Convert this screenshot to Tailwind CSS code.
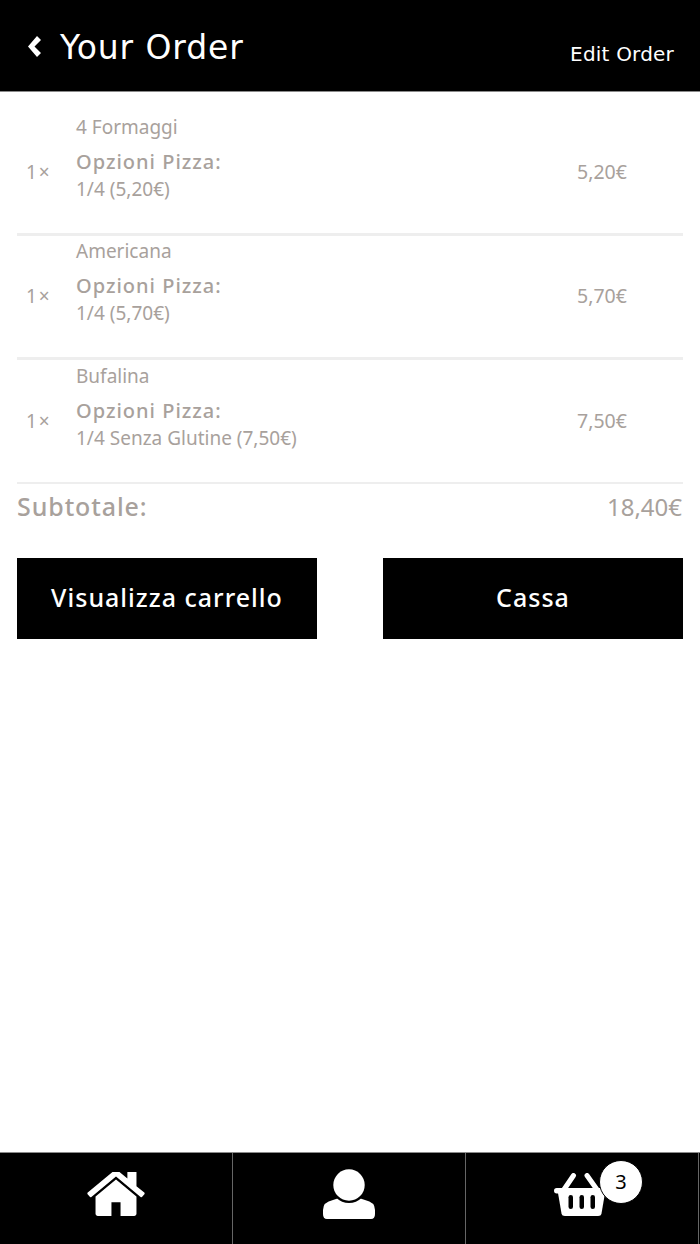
<!DOCTYPE html>
<html lang="en">
<head>
    <meta charset="UTF-8">
    <meta name="viewport" content="width=device-width, initial-scale=1.0">
    <title>Your Order</title>
    <script src="https://cdn.jsdelivr.net/npm/@tailwindcss/browser@4"></script>
</head>
<body class="bg-white font-['Noto_Sans',sans-serif] text-[#a8a19c]">
    <div class="flex flex-col h-[1244px] w-[700px] overflow-hidden">
        <!-- Header -->
        <header class="h-[92px] shrink-0 bg-black border-b border-[#8a8a8a] flex justify-between text-white font-['DejaVu_Sans',sans-serif]">
            <div class="flex items-center pl-[28px] pt-[4px]">
                <svg class="w-[13px] h-[21px] mr-[19px] -mt-[2px]" viewBox="0 0 13 21" fill="#fff"><path d="M9 0 13 4 6.500 10.500 13 17 9 21 0 10.500z"/></svg>
                <span class="text-[33px] tracking-[0.9px] leading-none">Your Order</span>
            </div>
            <a class="pt-[42px] pr-[26px] text-[20px] leading-[24px] tracking-[0.2px]">Edit Order</a>
        </header>

        <!-- Cart -->
        <main class="flex-1 px-[17px] pt-[19px]">
            <div class="h-[125px] border-b-[3px] border-[#eeeeee] flex items-center">
                <div class="w-[59px] pl-[9px] text-[19px] [word-spacing:-3px]">1 ×</div>
                <div class="flex-1 self-start pt-[3px]">
                    <div class="text-[19px] leading-[26px]">4 Formaggi</div>
                    <div class="mt-[9px] text-[20px] leading-[26px] font-medium tracking-[1px]">Opzioni Pizza:</div>
                    <div class="text-[19px] leading-[28px]">1/4 (5,20€)</div>
                </div>
                <div class="w-[106px] text-[19.500px]">5,20€</div>
            </div>
            <div class="h-[124px] pb-[1px] border-b-[3px] border-[#eeeeee] flex items-center">
                <div class="w-[59px] pl-[9px] text-[19px] [word-spacing:-3px]">1 ×</div>
                <div class="flex-1 self-start pt-[2px]">
                    <div class="text-[19px] leading-[26px]">Americana</div>
                    <div class="mt-[9px] text-[20px] leading-[26px] font-medium tracking-[1px]">Opzioni Pizza:</div>
                    <div class="text-[19px] leading-[28px]">1/4 (5,70€)</div>
                </div>
                <div class="w-[106px] text-[19.500px]">5,70€</div>
            </div>
            <div class="h-[124px] border-b-[2px] border-[#eeeeee] flex items-center">
                <div class="w-[59px] pl-[9px] text-[19px] [word-spacing:-3px]">1 ×</div>
                <div class="flex-1 self-start pt-[3px]">
                    <div class="text-[19px] leading-[26px]">Bufalina</div>
                    <div class="mt-[9px] text-[20px] leading-[26px] font-medium tracking-[1px]">Opzioni Pizza:</div>
                    <div class="text-[19px] leading-[28px]">1/4 Senza Glutine (7,50€)</div>
                </div>
                <div class="w-[106px] text-[19.500px]">7,50€</div>
            </div>
            <div class="flex justify-between h-[47px] pb-[2px] items-center text-[25px] font-medium">
                <span class="tracking-[0.9px]">Subtotale:</span>
                <span class="text-[24px] font-normal pr-[1px]">18,40€</span>
            </div>
            <div class="mt-[27px] flex justify-between">
                <a class="w-[300px] h-[81px] pb-[2px] bg-black text-white flex items-center justify-center text-[25px] font-medium tracking-[1px]">Visualizza carrello</a>
                <a class="w-[300px] h-[81px] pb-[2px] bg-black text-white flex items-center justify-center text-[25px] font-medium tracking-[1px]">Cassa</a>
            </div>
        </main>

        <!-- Tab bar -->
        <nav class="h-[92px] shrink-0 bg-black border-t border-[#8a8a8a] flex">
            <a class="w-[233px] border-r border-[#666] flex justify-center pt-[19px]">
                <svg class="w-[58px] h-[44px]" viewBox="90 298 1612 1238" fill="#fff">
                    <path d="M1472 992v480q0 26-19 45t-45 19h-384v-384h-256v384h-384q-26 0-45-19t-19-45v-480q0-1 .5-3t.5-3l575-474 575 474q1 2 1 6zm223-69l-62 74q-8 9-21 11h-3q-13 0-21-7l-692-577-692 577q-12 8-24 7-13-2-21-11l-62-74q-8-10-7-23.500t11-21.500l719-599q32-26 76-26t76 26l244 204v-195q0-14 9-23t23-9h192q14 0 23 9t9 23v408l219 182q10 8 11 21.500t-7 23.500z"/>
                </svg>
            </a>
            <a class="w-[233px] border-r border-[#666] flex justify-center pt-[16px]">
                <svg class="w-[52px] h-[50px]" viewBox="0 0 52 50" fill="#fff">
                    <path d="M4 50Q0 50 0 45V41Q0 33 10 31L16 29H36L42 31Q52 33 52 41V45Q52 50 48 50Z"/>
                    <circle cx="26" cy="16" r="18" fill="#000"/>
                    <circle cx="26" cy="16" r="15.700"/>
                </svg>
            </a>
            <a class="w-[233px] border-r border-[#666] pl-[88px] pt-[20px] relative">
                <svg class="w-[56px] h-[44px]" viewBox="0 0 56 44" fill="#fff">
                    <path d="M19.500 2.500 9 18M33 2.500l11 15.500" stroke="#fff" stroke-width="5" stroke-linecap="round"/>
                    <rect x="0" y="15" width="56" height="5.500" rx="2.750"/>
                    <path d="M4 20h47l-3.500 20.500q-.5 2.500-3.500 2.500H11q-3 0-3.500-2.500z"/>
                    <rect x="14.500" y="22" width="4.500" height="14" rx="2.250" fill="#000"/>
                    <rect x="25.500" y="22" width="4.500" height="14" rx="2.250" fill="#000"/>
                    <rect x="36.500" y="22" width="4.500" height="14" rx="2.250" fill="#000"/>
                </svg>
                <span class="absolute left-[133px] top-[7px] w-[44px] h-[44px] rounded-full bg-white text-black border border-black flex items-center justify-center text-[20px]">3</span>
            </a>
        </nav>
    </div>
</body>
</html>
